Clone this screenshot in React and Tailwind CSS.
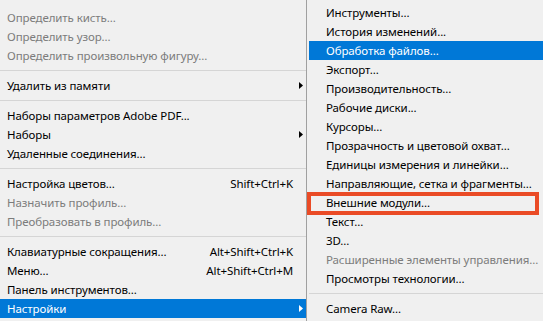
const leftItems = [
  { label: 'Определить кисть...', disabled: true },
  { label: 'Определить узор...', disabled: true },
  { label: 'Определить произвольную фигуру...', disabled: true },
  { sep: true },
  { label: 'Удалить из памяти', arrow: true },
  { sep: true },
  { label: 'Наборы параметров Adobe PDF...' },
  { label: 'Наборы', arrow: true },
  { label: 'Удаленные соединения...' },
  { sep: true },
  { label: 'Настройка цветов...', shortcut: 'Shift+Ctrl+K' },
  { label: 'Назначить профиль...', disabled: true },
  { label: 'Преобразовать в профиль...', disabled: true },
  { sep: true },
  { label: 'Клавиатурные сокращения...', shortcut: 'Alt+Shift+Ctrl+K' },
  { label: 'Меню...', shortcut: 'Alt+Shift+Ctrl+M' },
  { label: 'Панель инструментов...' },
  { label: 'Настройки', arrow: true, active: true },
];

const rightItems = [
  { label: 'Инструменты...' },
  { label: 'История изменений...' },
  { label: 'Обработка файлов...', active: true },
  { label: 'Экспорт...' },
  { label: 'Производительность...' },
  { label: 'Рабочие диски...' },
  { label: 'Курсоры...' },
  { label: 'Прозрачность и цветовой охват...' },
  { label: 'Единицы измерения и линейки...' },
  { label: 'Направляющие, сетка и фрагменты...' },
  { label: 'Внешние модули...' },
  { label: 'Текст...' },
  { label: '3D...' },
  { label: 'Расширенные элементы управления...', disabled: true },
  { label: 'Просмотры технологии...' },
  { sep: true },
  { label: 'Camera Raw...' },
];

const Arrow = ({ white }) => (
  <svg width="4" height="7" viewBox="0 0 4 7" className="shrink-0">
    <path d="M0 0 L4 3.5 L0 7 Z" fill={white ? '#ffffff' : '#000000'} />
  </svg>
);

const LeftRow = ({ item }) => {
  if (item.sep) {
    return (
      <div className="h-[11px] flex items-center">
        <div className="h-px w-full bg-[#d5d5d5]" />
      </div>
    );
  }
  return (
    <div
      className={
        'h-[19px] flex items-center pl-[7px] pr-[3px] ' +
        (item.active ? 'bg-[#0078d7] text-white' : item.disabled ? 'text-[#7c7c7c]' : 'text-black')
      }
    >
      <span className="flex-1 whitespace-nowrap">{item.label}</span>
      {item.shortcut ? <span className="whitespace-nowrap pr-[10px]">{item.shortcut}</span> : null}
      {item.arrow ? <Arrow white={item.active} /> : null}
    </div>
  );
};

const RightRow = ({ item }) => {
  if (item.sep) {
    return (
      <div className="h-[11px] flex items-center ml-[2px]">
        <div className="h-px w-full bg-[#d5d5d5]" />
      </div>
    );
  }
  return (
    <div
      className={
        'h-[19px] flex items-center ml-[2px] pl-[17px] whitespace-nowrap ' +
        (item.active ? 'bg-[#0078d7] text-white' : item.disabled ? 'text-[#7c7c7c]' : 'text-black')
      }
    >
      {item.label}
    </div>
  );
};

export default function App() {
  return (
    <div
      className="relative w-[543px] h-[321px] overflow-hidden bg-[#f0f0f0] flex text-[11.5px] tracking-[-0.1px] leading-none"
      style={{ fontFamily: '"Noto Sans", "Open Sans", sans-serif' }}
    >
      <div className="w-[307px] shrink-0 pt-[8px] border-r border-[#a0a0a0]">
        {leftItems.map((item, i) => (
          <LeftRow key={i} item={item} />
        ))}
      </div>
      <div className="flex-1 pt-[3px]">
        {rightItems.map((item, i) => (
          <RightRow key={i} item={item} />
        ))}
      </div>
      <div className="absolute left-[307px] top-[192px] w-[232px] h-[23px] border-4 border-[#ea4b26]" />
    </div>
  );
}
